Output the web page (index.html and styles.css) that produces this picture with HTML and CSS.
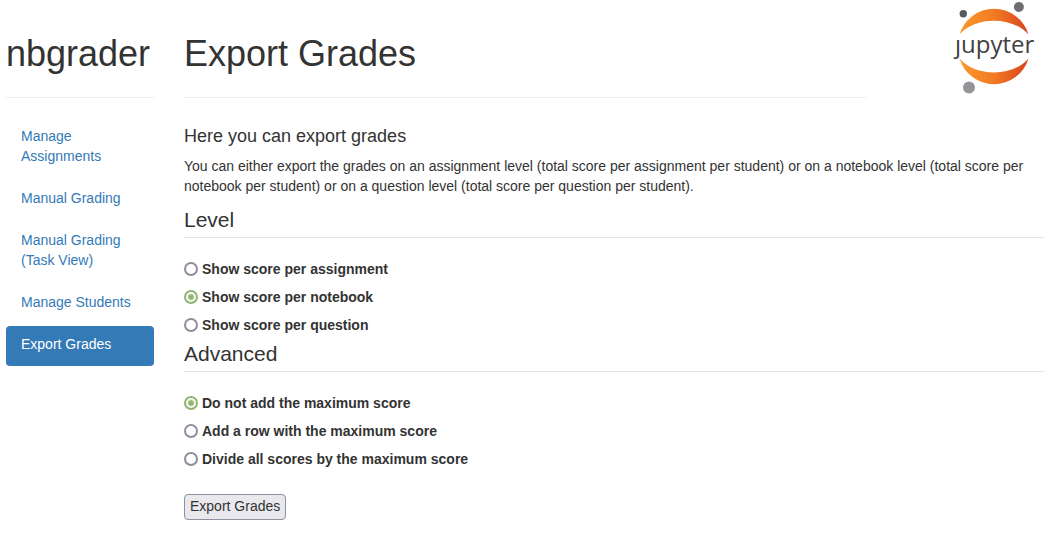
FILE: index.html
```html
<!DOCTYPE html>
<html lang="en">
<head>
<meta charset="utf-8">
<title>nbgrader - Export Grades</title>
<link rel="stylesheet" href="styles.css">
</head>
<body>
<div class="container">
  <header class="row">
    <div class="col-side page-header"><h1>nbgrader</h1></div>
    <div class="col-title page-header"><h1>Export Grades</h1></div>
    <div class="col-side brand">
      <svg class="logo" viewBox="953 0 82 96" role="img" aria-label="Jupyter">
        <defs>
          <linearGradient id="flame" gradientUnits="userSpaceOnUse" x1="960" y1="0" x2="1028" y2="0">
            <stop offset="0" stop-color="#f9982d"/>
            <stop offset="0.5" stop-color="#f37b24"/>
            <stop offset="1" stop-color="#d8431f"/>
          </linearGradient>
        </defs>
        <path fill="url(#flame)" d="M959.5 34.5A36 36 0 0 1 1028.5 34.5C1013 16 975 16 959.5 34.5Z"/>
        <path fill="url(#flame)" d="M959.5 58.5A36 36 0 0 0 1028.5 58.5C1013 77 975 77 959.5 58.5Z"/>
        <circle cx="963.3" cy="13.7" r="3.7" fill="#58595b"/>
        <circle cx="1018.9" cy="7" r="5" fill="#6d6e71"/>
        <circle cx="969" cy="87.6" r="6" fill="#939598"/>
        <text class="logo-text" x="955" y="53">ȷupyter</text>
      </svg>
    </div>
  </header>
  <div class="row">
    <nav class="col-side">
      <ul class="nav">
        <li><a href="#">Manage Assignments</a></li>
        <li><a href="#">Manual Grading</a></li>
        <li><a href="#">Manual Grading (Task View)</a></li>
        <li><a href="#">Manage Students</a></li>
        <li><a class="active" href="#" aria-current="page">Export Grades</a></li>
      </ul>
    </nav>
    <main class="col-main">
      <h4>Here you can export grades</h4>
      <p>You can either export the grades on an assignment level (total score per assignment per student) or on a notebook level (total score per notebook per student) or on a question level (total score per question per student).</p>
      <form>
        <fieldset>
          <legend>Level</legend>
          <div class="options">
            <label><input type="radio" name="level" value="assignment">Show score per assignment</label>
            <label><input type="radio" name="level" value="notebook" checked>Show score per notebook</label>
            <label><input type="radio" name="level" value="question">Show score per question</label>
          </div>
        </fieldset>
        <fieldset>
          <legend>Advanced</legend>
          <div class="options">
            <label><input type="radio" name="max" value="none" checked>Do not add the maximum score</label>
            <label><input type="radio" name="max" value="row">Add a row with the maximum score</label>
            <label><input type="radio" name="max" value="divide">Divide all scores by the maximum score</label>
          </div>
        </fieldset>
        <button class="export" type="button">Export Grades</button>
      </form>
    </main>
  </div>
</div>
</body>
</html>
```
FILE: styles.css
```css
* {
  box-sizing: border-box;
}

body {
  margin: 0;
  background: #fff;
  color: #333;
  font: 14px/20px "Liberation Sans", Arial, sans-serif;
}

.container {
  padding: 0 4px 0 6px;
}

.row {
  display: grid;
  grid-template-columns: repeat(12, minmax(0, 1fr));
  column-gap: 30px;
}

.col-side {
  grid-column: span 2;
}

.col-title {
  grid-column: span 8;
}

.col-main {
  grid-column: span 10;
  padding-top: 28px;
}

.page-header {
  padding: 34px 0 23px;
  border-bottom: 1px solid #eee;
}

h1 {
  margin: 0;
  font-size: 36px;
  font-weight: 500;
  line-height: 40px;
  white-space: nowrap;
}

.brand {
  display: flex;
  justify-content: flex-end;
  align-items: flex-start;
  padding-right: 9px;
}

.logo {
  width: 82px;
  height: 96px;
}

.logo-text {
  fill: #414042;
  font-family: "Open Sans", sans-serif;
  font-size: 24px;
}

.nav {
  display: flex;
  flex-direction: column;
  gap: 2px;
  margin: 20px 0 0;
  padding: 0;
  list-style: none;
}

.nav a {
  display: block;
  padding: 8px 15px 12px;
  border-radius: 4px;
  color: #337ab7;
  text-decoration: none;
}

.nav .active {
  background: #337ab7;
  color: #fff;
}

h4 {
  margin: 0 0 10px;
  font-size: 18px;
  font-weight: 500;
  line-height: 20px;
}

p {
  margin: 0 0 10px;
}

fieldset {
  min-width: 0;
  margin: 0 0 5px;
  padding: 0;
  border: 0;
}

legend {
  width: 100%;
  margin-bottom: 21px;
  padding: 0 0 3px;
  border-bottom: 1px solid #e5e5e5;
  font-size: 21px;
  line-height: 28px;
}

.options {
  display: grid;
  justify-items: start;
  gap: 8px;
}

label {
  display: flex;
  align-items: center;
  gap: 4px;
  font-weight: 700;
}

input[type="radio"] {
  appearance: none;
  flex: none;
  width: 14px;
  height: 14px;
  margin: 0;
  border: 2px solid #8f8f9d;
  border-radius: 50%;
  background: #fff;
}

input[type="radio"]:checked {
  border-color: #92b372;
  background: radial-gradient(circle, #92b372 2px, #fff 4px);
}

.export {
  margin-top: 20px;
  padding: 1px 5px 3px;
  border: 1px solid #8f8f9d;
  border-radius: 4px;
  background: #e9e9ed;
  color: #333;
  font: inherit;
}
```
